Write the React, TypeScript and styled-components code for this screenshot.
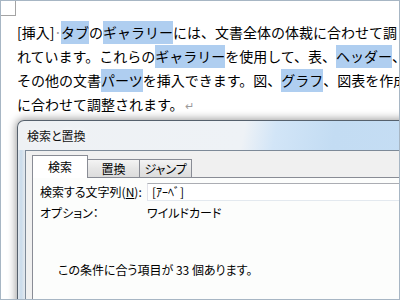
import React from 'react'
import styled, { createGlobalStyle } from 'styled-components'

const GlobalStyle = createGlobalStyle`
  html, body {
    margin: 0;
    padding: 0;
    background: #ffffff;
  }
  body {
    font-family: "Noto Sans CJK JP", "Noto Sans", sans-serif;
  }
`

const App = () => {
  return (
    <>
      <GlobalStyle />
      <Page>
        <CornerMark />
        <Doc>
          <Line>
            <Bracket>[挿入]</Bracket>
            <SpaceMark>·</SpaceMark>
            <Sel>タブ</Sel>の<Sel>ギャラリー</Sel>には、文書全体の体裁に合わせて調
          </Line>
          <Line>
            れています。これらの<Sel>ギャラリー</Sel>を使用して、表、<Sel>ヘッダー</Sel>、
          </Line>
          <Line>
            その他の文書<Sel>パーツ</Sel>を挿入できます。図、<Sel>グラフ</Sel>、図表を作成
          </Line>
          <Line>
            に合わせて調整されます。<ParaMark>↵</ParaMark>
          </Line>
        </Doc>

        <Dialog>
          <TitleBar>検索と置換</TitleBar>
          <Frame>
            <Client>
              <TabStrip>
                <Tab selected>検索</Tab>
                <Tab>置換</Tab>
                <Tab>ジャンプ</Tab>
              </TabStrip>
              <TabPanel>
                <FieldRow>
                  <Label>
                    検索する文字列(<u>N</u>):
                  </Label>
                  <TextBox>[ｱｰﾍﾞ]</TextBox>
                </FieldRow>
                <OptionRow>
                  <Label>オプション：</Label>
                  <Label>ワイルドカード</Label>
                </OptionRow>
                <ResultText>この条件に合う項目が 33 個あります。</ResultText>
              </TabPanel>
            </Client>
          </Frame>
        </Dialog>
      </Page>
    </>
  )
}

export default App

const Page = styled.div`
  position: relative;
  width: 400px;
  height: 300px;
  box-sizing: border-box;
  border: 1px solid #a7b6c4;
  background: #ffffff;
  overflow: hidden;
`

const CornerMark = styled.div`
  position: absolute;
  top: -1px;
  left: -1px;
  width: 15px;
  height: 15px;
  border-right: 1px solid #a4a4a4;
  border-bottom: 1px solid #a4a4a4;
`

const Doc = styled.div`
  padding: 20px 0 0 16px;
  font-size: 14px;
  color: #000000;
`

const Line = styled.div`
  height: 24px;
  line-height: 23px;
  white-space: nowrap;
`

const Sel = styled.span`
  display: inline-block;
  vertical-align: top;
  height: 23px;
  background: #afcef0;
`

const Bracket = styled.span`
  display: inline-block;
  width: 37px;
`

const SpaceMark = styled.span`
  display: inline-block;
  width: 7px;
  color: #9a9a9a;
  text-align: left;
`

const ParaMark = styled.span`
  font-size: 11px;
  color: #9a9a9a;
  margin-left: 1px;
`

const Dialog = styled.div`
  margin: 3px 0 0 16px;
  width: 420px;
  height: 200px;
  border: 1px solid #56616d;
  border-bottom: none;
  border-radius: 7px 7px 0 0;
  background: linear-gradient(
    100deg,
    #eef1f4 0%,
    #eef2f6 50%,
    #d2e5f7 57%,
    #c3dcf3 70%,
    #c6def4 100%
  );
  box-shadow: 0 0 9px 1px rgba(0, 0, 0, 0.4);
  font-size: 12px;
  font-feature-settings: 'palt';
  color: #000000;
`

const TitleBar = styled.div`
  height: 29px;
  line-height: 29px;
  padding-left: 9px;
  color: #111111;
  text-shadow: 0 0 6px #ffffff;
`

const Frame = styled.div`
  padding-left: 7px;
  height: 171px;
  background: linear-gradient(to right, #e2e8ee 0px, #c9dbeb 3px, #e4e9ee 7px, transparent 8px);
`

const Client = styled.div`
  height: 100%;
  box-sizing: border-box;
  border-top: 1px solid #7d8a98;
  border-left: 1px solid #7d8a98;
  background: #f0f0f0;
  padding: 4px 0 0 6px;
`

const TabStrip = styled.div`
  display: flex;
  align-items: flex-end;
  height: 22px;
`

const Tab = styled.div<{ selected?: boolean }>`
  position: relative;
  z-index: ${(p) => (p.selected ? 1 : 0)};
  box-sizing: border-box;
  width: ${(p) => (p.selected ? '56px' : '52px')};
  height: ${(p) => (p.selected ? '23px' : '18px')};
  margin-bottom: ${(p) => (p.selected ? '-1px' : '0')};
  border: 1px solid #898c95;
  border-bottom: none;
  border-left: ${(p) => (p.selected ? '1px solid #898c95' : 'none')};
  background: ${(p) =>
    p.selected ? '#ffffff' : 'linear-gradient(#f4f4f4, #e6e6e6 50%, #dcdcdc)'};
  line-height: ${(p) => (p.selected ? '21px' : '18px')};
  text-align: center;
`

const TabPanel = styled.div`
  height: 140px;
  border: 1px solid #898c95;
  background: #fcfdfc;
  padding: 5px 0 0 7px;
`

const FieldRow = styled.div`
  display: grid;
  grid-template-columns: 107px 1fr;
  align-items: center;
  height: 18px;
`

const OptionRow = styled(FieldRow)`
  margin-top: 4px;
  height: 16px;
`

const Label = styled.span`
  line-height: 16px;
  white-space: nowrap;
`

const TextBox = styled.div`
  box-sizing: border-box;
  height: 18px;
  border: 1px solid #abadb3;
  border-left-color: #e2e3ea;
  border-bottom-color: #e3e9ef;
  background: #ffffff;
  padding-left: 4px;
  line-height: 16px;
`

const ResultText = styled.div`
  margin-top: 41px;
  padding-left: 18px;
  line-height: 16px;
  white-space: nowrap;
`
